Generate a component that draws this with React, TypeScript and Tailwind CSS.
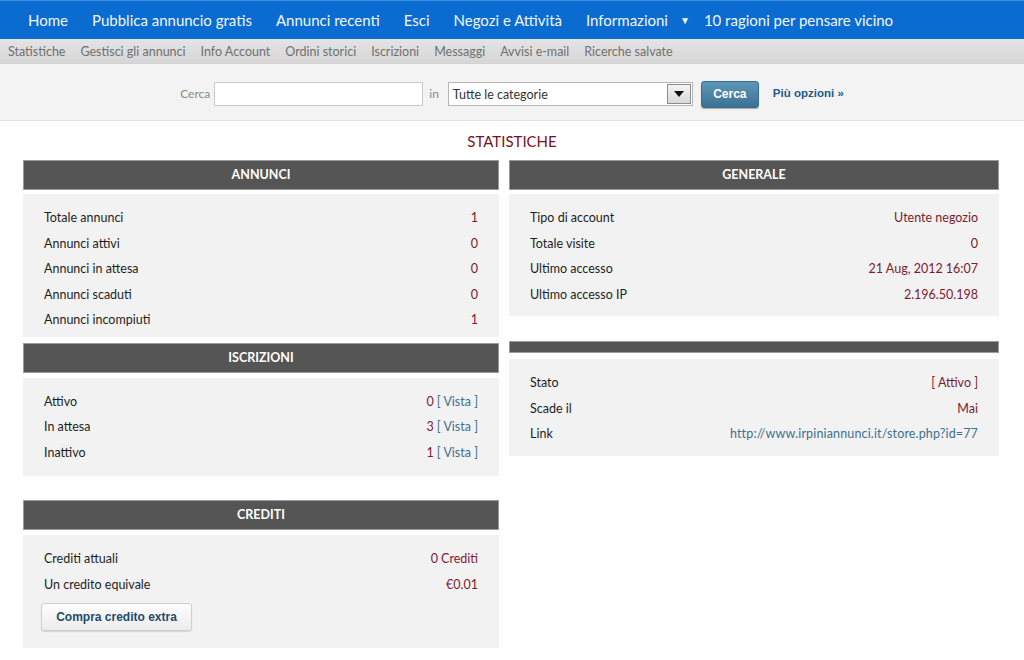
import type { ReactNode } from 'react'

const TOP_LINKS = [
  'Home',
  'Pubblica annuncio gratis',
  'Annunci recenti',
  'Esci',
  'Negozi e Attività',
]

const SUB_LINKS = [
  'Statistiche',
  'Gestisci gli annunci',
  'Info Account',
  'Ordini storici',
  'Iscrizioni',
  'Messaggi',
  'Avvisi e-mail',
  'Ricerche salvate',
]

type Row = { label: string; value: ReactNode }

function Vista({ n }: { n: number }) {
  return (
    <span>
      {n} <span className="text-[#3f6f8f]">[ Vista ]</span>
    </span>
  )
}

function Rows({ rows }: { rows: Row[] }) {
  return (
    <div>
      {rows.map(r => (
        <div key={r.label} className="flex h-[25.5px] items-center justify-between">
          <span className="text-[#1e1e1e]">{r.label}</span>
          <span className="text-[#7d1a30]">{r.value}</span>
        </div>
      ))}
    </div>
  )
}

function PanelHead({ title }: { title?: string }) {
  return (
    <div
      className={`flex items-center justify-center border border-[#9b9b9b] bg-[#555555] pt-[1px] text-[12.5px] font-bold text-white ${
        title ? 'h-[30px]' : 'h-[12px]'
      }`}
    >
      {title}
    </div>
  )
}

export default function App() {
  return (
    <div className="h-[660px] w-[1024px] overflow-hidden bg-white font-['Lato',sans-serif] text-[12.5px]">
      {/* Main nav */}
      <nav className="flex h-[39px] items-center gap-[24px] border-t border-[#3d8fe0] bg-[#0a6bd0] pl-[28px] text-[15px] text-[#f2f6ff]">
        {TOP_LINKS.map(l => (
          <a key={l} href="#">
            {l}
          </a>
        ))}
        <span className="flex items-center gap-[12px]">
          <a href="#">Informazioni</a>
          <span className="text-[10px]">▼</span>
        </span>
        <a href="#" className="-ml-[10px]">
          10 ragioni per pensare vicino
        </a>
      </nav>

      {/* Sub nav */}
      <div className="flex h-[25px] items-center gap-[15px] border-b border-[#d2d2d2] bg-gradient-to-b from-[#e4e4e4] to-[#d6d6d6] pl-[8px] pt-[3px] text-[12.5px] text-[#707070]">
        {SUB_LINKS.map(l => (
          <a key={l} href="#">
            {l}
          </a>
        ))}
      </div>

      {/* Search */}
      <div className="flex h-[57px] items-center justify-center border-b border-[#e2e2e2] bg-[#f3f3f3] pt-[4px] text-[12px] text-[#888]">
        <span className="mr-[4px]">Cerca</span>
        <input className="h-[24px] w-[209px] border border-[#c9c9c9] bg-white" />
        <span className="ml-[6px] mr-[9px]">in</span>
        <div className="flex h-[24px] w-[245px] items-center justify-between border border-[#b5b5b5] bg-white pl-[4px] pr-[1px] text-[12.5px] text-[#333]">
          <span className="pt-[2px]">Tutte le categorie</span>
          <span className="flex h-[20px] w-[24px] items-center justify-center border border-[#8c8c8c] bg-gradient-to-b from-[#f4f4f4] to-[#d9d9d9]">
            <svg width="10" height="6" viewBox="0 0 10 6">
              <path d="M0 0h10L5 6z" fill="#111" />
            </svg>
          </span>
        </div>
        <button className="ml-[8px] h-[27px] w-[58px] rounded-[3px] border border-[#3a6c8c] bg-gradient-to-b from-[#5f97b8] to-[#3b7193] font-['Liberation_Sans',sans-serif] text-[12px] font-bold text-white shadow-[0_1px_1px_rgba(0,0,0,0.3)]">
          Cerca
        </button>
        <a href="#" className="ml-[14px] font-['Liberation_Sans',sans-serif] text-[11.5px] font-bold text-[#1f5a8a]">
          Più opzioni »
        </a>
      </div>

      <h1 className="mt-[9px] text-center text-[15px] text-[#7a0f24]">STATISTICHE</h1>

      <div className="mt-[7px] flex gap-[10px] pl-[23px]">
        {/* Left column */}
        <div className="flex w-[476px] flex-col">
          <PanelHead title="ANNUNCI" />
          <div className="mt-[4px] bg-[#f2f2f2] px-[21px] pb-[3px] pt-[12.5px]">
            <Rows
              rows={[
                { label: 'Totale annunci', value: '1' },
                { label: 'Annunci attivi', value: '0' },
                { label: 'Annunci in attesa', value: '0' },
                { label: 'Annunci scaduti', value: '0' },
                { label: 'Annunci incompiuti', value: '1' },
              ]}
            />
          </div>

          <div className="mt-[6px]">
            <PanelHead title="ISCRIZIONI" />
          </div>
          <div className="mt-[5px] bg-[#f2f2f2] px-[21px] pb-[10px] pt-[12px]">
            <Rows
              rows={[
                { label: 'Attivo', value: <Vista n={0} /> },
                { label: 'In attesa', value: <Vista n={3} /> },
                { label: 'Inattivo', value: <Vista n={1} /> },
              ]}
            />
          </div>

          <div className="mt-[24px]">
            <PanelHead title="CREDITI" />
          </div>
          <div className="mt-[5px] bg-[#f2f2f2] px-[21px] pb-[17px] pt-[12px]">
            <Rows
              rows={[
                { label: 'Crediti attuali', value: '0 Crediti' },
                { label: 'Un credito equivale', value: '€0.01' },
              ]}
            />
            <button className="ml-[-3px] mt-[5px] h-[28px] w-[151px] rounded-[3px] border border-[#cfcfcf] bg-gradient-to-b from-[#fdfdfd] to-[#ececec] font-['Liberation_Sans',sans-serif] text-[12px] font-bold text-[#1f4a6a] shadow-[0_1px_1px_rgba(0,0,0,0.12)]">
              Compra credito extra
            </button>
          </div>
        </div>

        {/* Right column */}
        <div className="flex w-[490px] flex-col">
          <PanelHead title="GENERALE" />
          <div className="mt-[4px] bg-[#f2f2f2] px-[21px] pb-[8px] pt-[12.5px]">
            <Rows
              rows={[
                { label: 'Tipo di account', value: 'Utente negozio' },
                { label: 'Totale visite', value: '0' },
                { label: 'Ultimo accesso', value: '21 Aug, 2012 16:07' },
                { label: 'Ultimo accesso IP', value: '2.196.50.198' },
              ]}
            />
          </div>

          <div className="mt-[25px]">
            <PanelHead />
          </div>
          <div className="mt-[6px] bg-[#f2f2f2] px-[21px] pb-[8px] pt-[12px]">
            <Rows
              rows={[
                { label: 'Stato', value: '[ Attivo ]' },
                { label: 'Scade il', value: 'Mai' },
                {
                  label: 'Link',
                  value: (
                    <a href="#" className="tracking-[0.15px] text-[#3f6f8f]">
                      http://www.irpiniannunci.it/store.php?id=77
                    </a>
                  ),
                },
              ]}
            />
          </div>
        </div>
      </div>
    </div>
  )
}
